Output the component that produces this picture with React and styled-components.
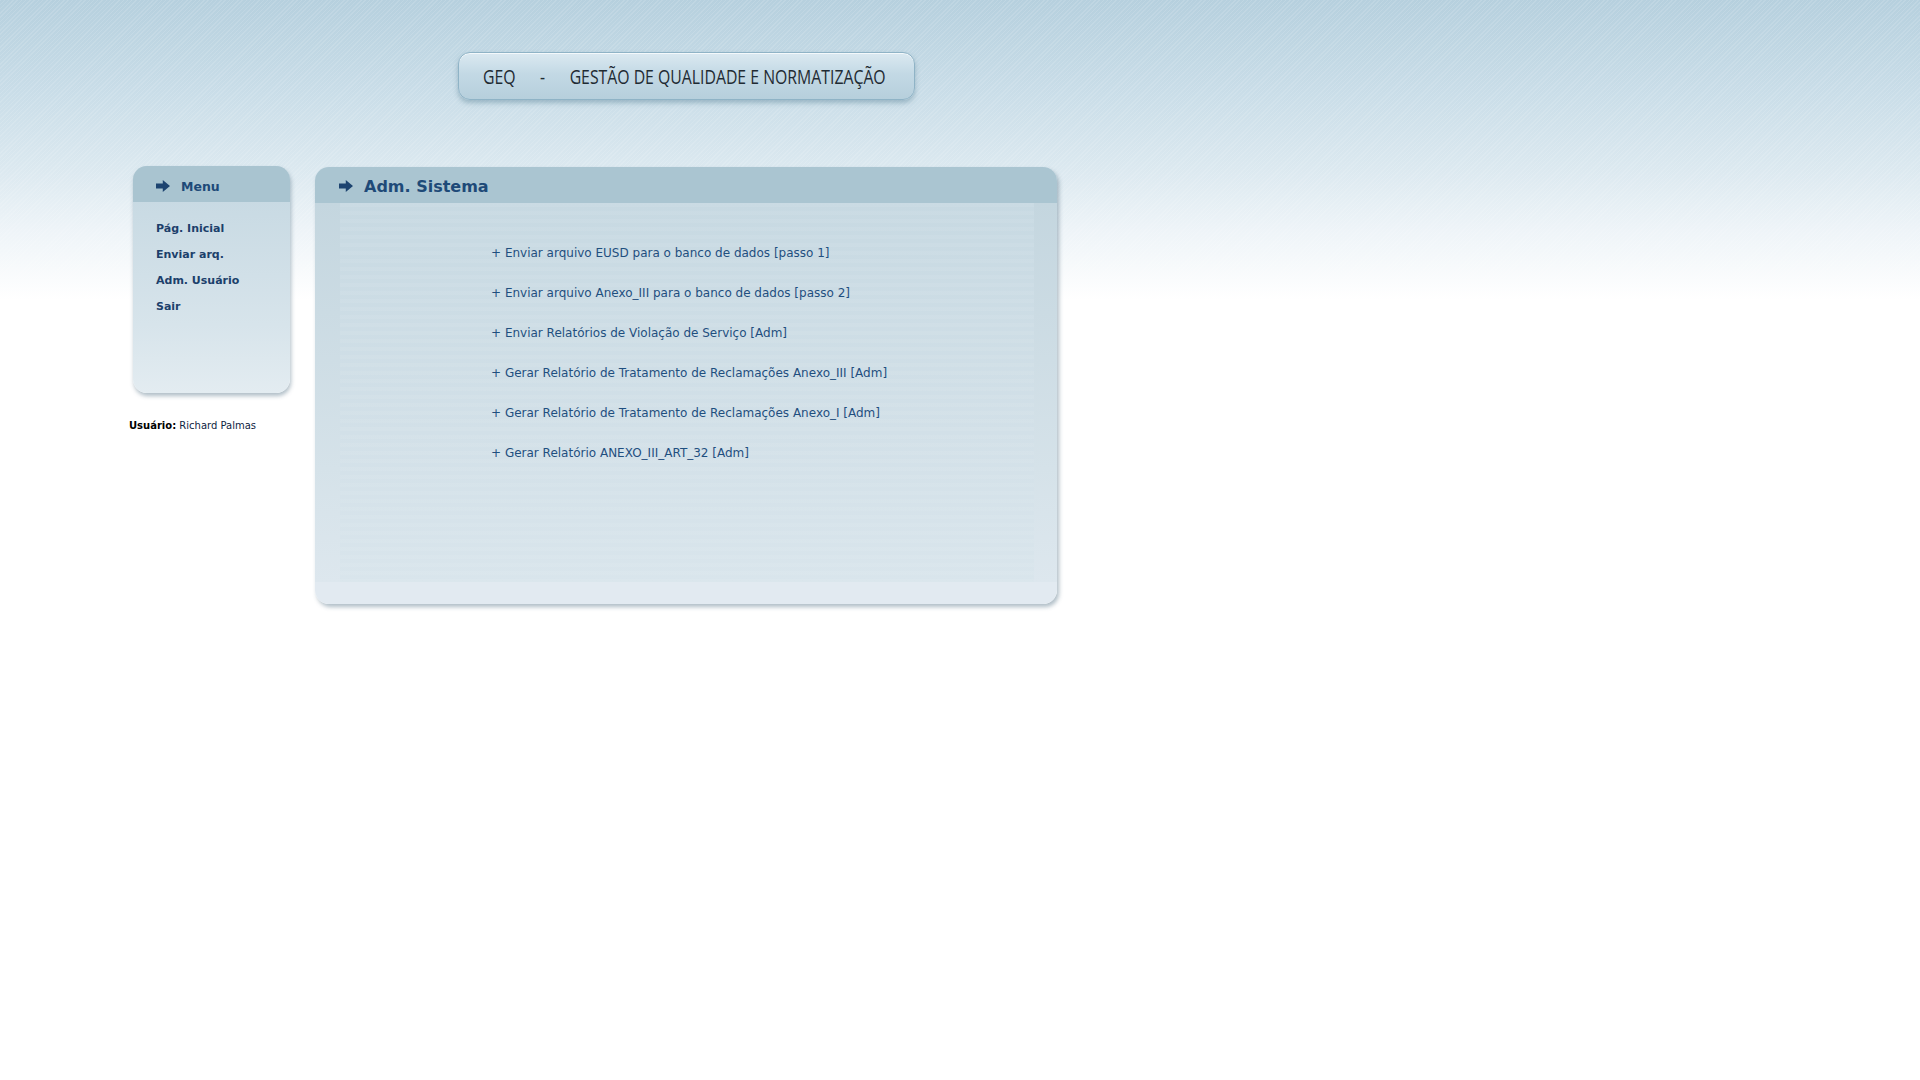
import React from "react";
import styled, { createGlobalStyle } from "styled-components";

const GlobalStyle = createGlobalStyle`
  html, body {
    margin: 0;
    padding: 0;
    background: #ffffff;
  }
  body {
    font-family: "DejaVu Sans", Verdana, sans-serif;
  }
`;

const links = [
  "Enviar arquivo EUSD para o banco de dados [passo 1]",
  "Enviar arquivo Anexo_III para o banco de dados [passo 2]",
  "Enviar Relatórios de Violação de Serviço [Adm]",
  "Gerar Relatório de Tratamento de Reclamações Anexo_III [Adm]",
  "Gerar Relatório de Tratamento de Reclamações Anexo_I [Adm]",
  "Gerar Relatório ANEXO_III_ART_32 [Adm]",
];

const menuItems = ["Pág. Inicial", "Enviar arq.", "Adm. Usuário", "Sair"];

const Arrow = () => (
  <svg width="14" height="12" viewBox="0 0 13 11">
    <path d="M0 3.2 H6.3 V0 L13 5.5 L6.3 11 V7.8 H0 Z" fill="#1d4470" />
  </svg>
);

const App = () => {
  return (
    <Page>
      <GlobalStyle />
      <Top>
        <Banner>
          <BannerText>
            <span>GEQ</span>
            <span>-</span>
            <span>GESTÃO DE QUALIDADE E NORMATIZAÇÃO</span>
          </BannerText>
        </Banner>
      </Top>
      <Body>
        <Side>
          <MenuBox>
            <MenuHead>
              <Arrow />
              <span>Menu</span>
            </MenuHead>
            <MenuList>
              {menuItems.map((m) => (
                <MenuLink key={m}>{m}</MenuLink>
              ))}
            </MenuList>
          </MenuBox>
          <UserLine>
            <b>Usuário:</b> Richard Palmas
          </UserLine>
        </Side>
        <Panel>
          <PanelHead>
            <Arrow />
            <h2>Adm. Sistema</h2>
          </PanelHead>
          <PanelBody>
            <Inner>
              {links.map((l) => (
                <LinkRow key={l}>+ {l}</LinkRow>
              ))}
            </Inner>
          </PanelBody>
          <PanelFoot />
        </Panel>
      </Body>
    </Page>
  );
};

export default App;

const Page = styled.div`
  min-height: 1080px;
  background:
    repeating-linear-gradient(
      135deg,
      rgba(255, 255, 255, 0.12) 0px,
      rgba(255, 255, 255, 0.12) 1px,
      transparent 1px,
      transparent 3px
    ),
    linear-gradient(
      180deg,
      #b6d0de 0px,
      #c9dde8 90px,
      #dce9f0 170px,
      #eef4f8 230px,
      #ffffff 300px,
      #ffffff 100%
    );
  background-size: 100% 300px, 100% 100%;
  background-repeat: no-repeat;
`;

const Top = styled.div`
  padding: 52px 0 0 458px;
  height: 166px;
  box-sizing: border-box;
`;

const Banner = styled.div`
  width: 457px;
  height: 48px;
  box-sizing: border-box;
  border-radius: 12px;
  border: 1px solid #8fb3c6;
  background: linear-gradient(180deg, #dbe9f1 0%, #c3d9e5 45%, #b6cfdc 100%);
  box-shadow: 0 3px 5px rgba(90, 130, 150, 0.45),
    inset 0 1px 0 rgba(255, 255, 255, 0.7);
  display: flex;
  align-items: center;
  padding-left: 24px;
  overflow: hidden;
`;

const BannerText = styled.div`
  display: flex;
  align-items: center;
  gap: 31px;
  white-space: nowrap;
  font-family: "Open Sans", "Noto Sans", sans-serif;
  font-size: 20px;
  color: #1f2b33;
  transform: scaleX(0.79);
  transform-origin: left center;
`;

const Body = styled.div`
  display: flex;
  align-items: flex-start;
  padding-left: 129px;
  gap: 22px;
`;

const Side = styled.div`
  width: 164px;
  display: flex;
  flex-direction: column;
`;

const MenuBox = styled.div`
  margin-left: 4px;
  width: 157px;
  height: 227px;
  border-radius: 14px;
  overflow: hidden;
  background: linear-gradient(180deg, #c4d7e1 0%, #d7e4eb 70%, #e3ecf1 100%);
  box-shadow: 1px 3px 4px rgba(80, 110, 130, 0.45);
  display: flex;
  flex-direction: column;
`;

const MenuHead = styled.div`
  height: 36px;
  box-sizing: border-box;
  padding: 4px 0 0 23px;
  background: #a9c4d0;
  display: flex;
  align-items: center;
  gap: 11px;
  font-size: 12.5px;
  font-weight: bold;
  color: #1e4a78;
`;

const MenuList = styled.div`
  display: flex;
  flex-direction: column;
  padding: 20px 0 0 23px;
  gap: 12px;
`;

const MenuLink = styled.a`
  font-size: 11px;
  font-weight: bold;
  color: #1c3f6b;
  line-height: 14px;
  cursor: pointer;
`;

const UserLine = styled.div`
  margin-top: 27px;
  font-size: 10px;
  color: #0e2442;
  white-space: nowrap;

  b {
    color: #000;
  }
`;

const Panel = styled.div`
  width: 742px;
  margin-top: 1px;
  border-radius: 14px;
  overflow: hidden;
  box-shadow: 2px 3px 4px rgba(80, 110, 130, 0.45);
  display: flex;
  flex-direction: column;
`;

const PanelHead = styled.div`
  height: 36px;
  box-sizing: border-box;
  padding: 2px 0 0 24px;
  background: #aac5d1;
  display: flex;
  align-items: center;
  gap: 11px;

  h2 {
    margin: 0;
    font-size: 16px;
    font-weight: bold;
    color: #1e4a78;
  }
`;

const PanelBody = styled.div`
  background: linear-gradient(180deg, #c4d6df 0%, #d5e2e9 70%, #dde7ee 100%);
  padding: 0 23px 0 25px;
`;

const Inner = styled.div`
  height: 379px;
  box-sizing: border-box;
  padding: 42px 0 0 151px;
  display: flex;
  flex-direction: column;
  gap: 24px;
  background: repeating-linear-gradient(
      180deg,
      rgba(255, 255, 255, 0.06) 0px,
      rgba(255, 255, 255, 0.06) 4px,
      transparent 4px,
      transparent 8px
    ),
    linear-gradient(180deg, #c7d9e2 0%, #d2e0e8 60%, #d9e5ec 100%);
`;

const LinkRow = styled.a`
  font-size: 12px;
  line-height: 16px;
  color: #1f4f7f;
  cursor: pointer;
`;

const PanelFoot = styled.div`
  height: 22px;
  background: #e2eaf1;
`;
